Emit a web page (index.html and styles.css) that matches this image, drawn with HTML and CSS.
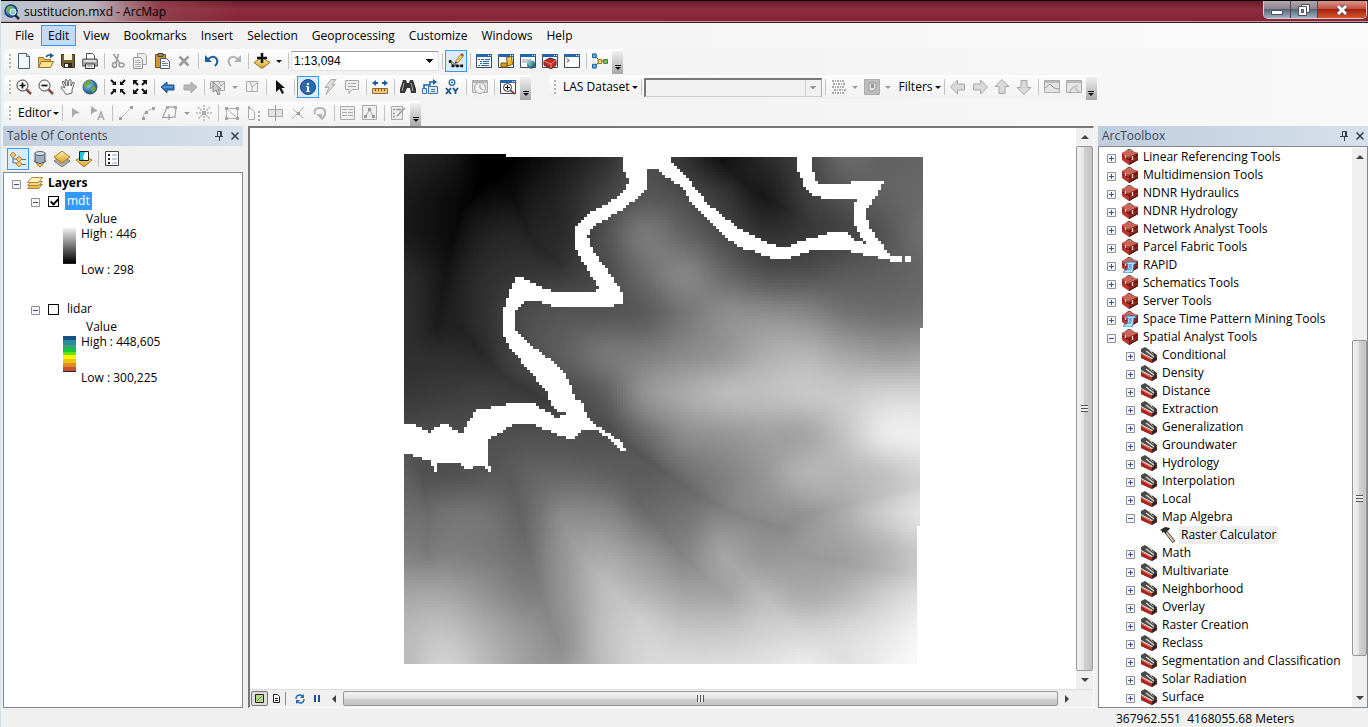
FILE: index.html
```html
<!doctype html>
<html lang="en">
    <head>
        <meta charset="UTF-8" />
        <meta name="viewport" content="width=device-width, initial-scale=1.0" />
        <title>sustitucion.mxd - ArcMap</title>
        <link rel="stylesheet" href="styles.css" />
    </head>
    <body>
        <!-- icon sprite -->
        <svg class="sprite" aria-hidden="true">
            <defs>
                <linearGradient id="gYellow" x1="0" y1="0" x2="0" y2="1">
                    <stop offset="0" stop-color="#fff0a8" />
                    <stop offset="1" stop-color="#d99b22" />
                </linearGradient>
                <radialGradient id="gGlobe" cx="0.35" cy="0.3" r="0.8">
                    <stop offset="0" stop-color="#a8dcf5" />
                    <stop offset="0.6" stop-color="#2c78b8" />
                    <stop offset="1" stop-color="#123c70" />
                </radialGradient>
            </defs>
            <symbol id="app" viewBox="0 0 16 16">
                <circle cx="7" cy="7" r="6" fill="url(#gGlobe)" stroke="#164070" stroke-width="1.5" />
                <path d="M3 3l4-1 2 2-2 2-1 4-3-3zM9 6l3-1-1 4-2 1z" fill="#6fb34a" />
                <circle cx="9" cy="8" r="3" fill="#cdeefb" fill-opacity=".5" stroke="#eaf6ff" />
                <path d="M11 11l4 4" stroke="#1c2c40" stroke-width="2.5" />
            </symbol>
            <symbol id="new" viewBox="0 0 16 16">
                <path d="M2.5.5h8l3 3v12h-11z" fill="#f2f9fd" stroke="#4c6070" />
                <path d="M10.5.5v3h3" fill="#cfe2ee" stroke="#4c6070" />
            </symbol>
            <symbol id="open" viewBox="0 0 16 16">
                <path d="M.5 14.5v-10h5l1 2h6v3" fill="#e9bd52" stroke="#9a7424" />
                <path d="M.5 14.5l3-6h12l-3 6z" fill="#ffe393" stroke="#9a7424" />
                <path d="M8 4q2-3 5-1.5" fill="none" stroke="#1d5795" stroke-width="1.5" />
                <path d="M12 0l4 2.5-4 3z" fill="#1d5795" />
            </symbol>
            <symbol id="save" viewBox="0 0 16 16">
                <path d="M1.5 1.5h13v13h-11l-2-2z" fill="#77622a" stroke="#3b3322" />
                <path d="M4 1h8v6H4z" fill="#f8f4dd" />
                <path d="M4 10h8v5H4z" fill="#2e2b28" />
                <path d="M5 11h3v3H5z" fill="#eee" />
            </symbol>
            <symbol id="print" viewBox="0 0 16 16">
                <path d="M4.5 6V.5h6l2 2V6" fill="#fff" stroke="#555" />
                <path d="M1 6h14l1 2v5H0V8z" fill="#a5a5a5" stroke="#333" stroke-width=".8" />
                <path d="M2 7h12v2H2z" fill="#ddd" />
                <path d="M3.5 11h9v4.5h-9z" fill="#fff" stroke="#333" />
                <path d="M5 13h6" stroke="#777" />
            </symbol>
            <symbol id="cut" viewBox="0 0 16 16">
                <g fill="none" stroke="#9a9a9a" stroke-width="1.5">
                    <path d="M3.5 1l6 9M8.5 1L6 10" />
                    <ellipse cx="4.5" cy="12" rx="2" ry="2.5" />
                    <ellipse cx="11.5" cy="12" rx="2.5" ry="2" />
                </g>
            </symbol>
            <symbol id="copy" viewBox="0 0 16 16">
                <path d="M5.5.5h7l2 2v9h-9z" fill="#eee" stroke="#a2a2a2" />
                <path d="M1.5 4.5h7l2 2v9h-9z" fill="#f2f2f2" stroke="#979797" />
                <path d="M3 7.5h5M3 9.5h6M3 11.5h6M3 13.5h6" stroke="#b4b4b4" />
            </symbol>
            <symbol id="paste" viewBox="0 0 16 16">
                <path d="M1.5 1.5h10v13h-10z" fill="#d79632" stroke="#775119" />
                <path d="M4 .5h5v3H4z" fill="#888" stroke="#444" />
                <path d="M6.5 5.5h6l3 3v7h-9z" fill="#fff" stroke="#46596c" />
                <path d="M8 8.5h3M8 10.5h6M8 12.5h6" stroke="#6788a8" />
            </symbol>
            <symbol id="delete" viewBox="0 0 16 16">
                <path d="M3.5 3.5l9 9m0-9l-9 9" stroke="#9b9b9b" stroke-width="2.5" />
            </symbol>
            <symbol id="undo" viewBox="0 0 16 16">
                <path d="M4 6q5-4 8-1 3 4-1 8" fill="none" stroke="#235ba0" stroke-width="2" />
                <path d="M1 2v7h7z" fill="#235ba0" />
            </symbol>
            <symbol id="redo" viewBox="0 0 16 16">
                <path d="M12 6q-5-4-8-1-3 4 1 8" fill="none" stroke="#b0b0b0" stroke-width="2" />
                <path d="M15 2v7H8z" fill="#b0b0b0" />
            </symbol>
            <symbol id="add" viewBox="0 0 16 16">
                <path d="M0 9.5l8-5 8 5-8 6z" fill="url(#gYellow)" stroke="#9b7226" />
                <path d="M8 0v10M3 5h10" stroke="#111" stroke-width="2.5" />
            </symbol>
            <symbol id="sketch" viewBox="0 0 18 18">
                <path d="M2.5 10L6 14.5h9M5 10l4 4" fill="none" stroke="#222" />
                <path d="M1 8h3v3H1zM4 13h3v3H4zM9 13h3v3H9zM14 13h3v3h-3z" fill="#111" />
                <path d="M8 10l6-8 3 2-6 7z" fill="#f5c45a" stroke="#815e25" stroke-width=".7" />
                <path d="M14 2l1.5-2L18 2l-1 2z" fill="#bd4b3b" />
                <path d="M8 10v2l3-1z" fill="#111" />
            </symbol>
            <symbol id="win" viewBox="0 0 16 16">
                <path d="M.5 1.5h15v13H.5z" fill="#fff" stroke="#384858" />
                <path d="M0 1h16v3H0z" fill="#2365ae" />
                <path d="M12 2h1v1h-1zM14 2h1v1h-1z" fill="#fff" />
            </symbol>
            <symbol id="toc" viewBox="0 0 16 16">
                <use href="#win" />
                <path d="M2 6.5h2M5 6.5h3M9 6.5h5M4 8.5h2M7 8.5h6M4 10.5h2M7 10.5h6M2 12.5h2M5 12.5h8" stroke="#2365ae" />
            </symbol>
            <symbol id="catalog" viewBox="0 0 16 16">
                <use href="#win" />
                <path d="M8.5 4.5l5-1 1 8-5 1.5z" fill="#f0ba36" stroke="#86600f" />
                <path d="M3 10h6v4H3z" fill="#dca027" stroke="#765515" />
                <path d="M10 6l3-1" stroke="#fff3b4" />
            </symbol>
            <symbol id="search" viewBox="0 0 16 16">
                <use href="#win" />
                <path d="M2 6h9v4H2z" fill="#c5cbd0" />
                <circle cx="11" cy="11.5" r="4" fill="url(#gGlobe)" />
                <path d="M9 10l3-1 1 2-3 3z" fill="#77aa4f" />
            </symbol>
            <symbol id="toolboxwin" viewBox="0 0 16 16">
                <use href="#win" />
                <path d="M2 8l6-3 6 2v5l-5 4-7-4z" fill="#b93026" stroke="#6d1717" />
                <path d="M2 8l7 3 5-4M9 11v4" fill="none" stroke="#e98a80" />
            </symbol>
            <symbol id="python" viewBox="0 0 16 16">
                <use href="#win" />
                <path d="M3 5.5l2 2-2 2" fill="none" stroke="#222" />
            </symbol>
            <symbol id="model" viewBox="0 0 17 16">
                <path d="M4 3l4 5-4 5M8 8h6" fill="none" stroke="#555" />
                <path d="M.5.5h4v4h-4zM.5 11.5h4v4h-4z" fill="#4cb3ec" stroke="#1c568e" />
                <path d="M6.5 6.5h4v4h-4z" fill="#ffdd50" stroke="#90661c" />
                <path d="M12.5 6.5h4v4h-4z" fill="#7fca5f" stroke="#35712a" />
            </symbol>
            <symbol id="zoomin" viewBox="0 0 16 16">
                <path d="M10 10l5 5" stroke="#8b4b41" stroke-width="2.5" />
                <circle cx="6.5" cy="6.5" r="5.5" fill="#f9f9f9" stroke="#333" />
                <path d="M6.5 3.5v6M3.5 6.5h6" stroke="#111" stroke-width="1.7" />
            </symbol>
            <symbol id="zoomout" viewBox="0 0 16 16">
                <path d="M10 10l5 5" stroke="#8b4b41" stroke-width="2.5" />
                <circle cx="6.5" cy="6.5" r="5.5" fill="#f9f9f9" stroke="#444" />
                <path d="M3.5 6.5h6" stroke="#111" stroke-width="1.7" />
            </symbol>
            <symbol id="pan" viewBox="0 0 16 16">
                <path d="M6 15.5Q4 12 1 9q0-2 2-1l2 1-3-6q1-2 2 0l2 4-1-6q1-1 2 0l1 6 1-6q1-1 2 0v6l2-4q2 0 1 2l-2 6v3z" fill="#fff" stroke="#555" stroke-width=".9" />
            </symbol>
            <symbol id="globe" viewBox="0 0 16 16">
                <circle cx="8" cy="8" r="7" fill="url(#gGlobe)" stroke="#315d7e" />
                <path d="M3 3l4-2 3 2-2 3-3 1-1 3-2-3zM9 8l4-1 1 3-3 4-2-2z" fill="#6fa647" />
            </symbol>
            <symbol id="fixedin" viewBox="0 0 16 16">
                <path d="M1 1l4 4M15 1l-4 4M1 15l4-4M15 15l-4-4" stroke="#111" stroke-width="2" />
                <path d="M6 2v4H2zM10 2v4h4zM6 14v-4H2zM10 14v-4h4z" fill="#111" />
            </symbol>
            <symbol id="fixedout" viewBox="0 0 16 16">
                <path d="M2 2l4 4M14 2l-4 4M2 14l4-4M14 14l-4-4" stroke="#111" stroke-width="2" />
                <path d="M1 1v5l5-5zM15 1v5l-5-5zM1 15v-5l5 5zM15 15v-5l-5 5z" fill="#111" />
            </symbol>
            <symbol id="back" viewBox="0 0 16 16">
                <path d="M1 8l6-5v3h7v5H7v3z" fill="#2871bd" stroke="#1e528b" />
                <path d="M3 8h10" stroke="#72b3e8" />
            </symbol>
            <symbol id="forward" viewBox="0 0 16 16">
                <path d="M15 8L9 3v3H2v5h7v3z" fill="#b8b8b8" stroke="#a6a6a6" />
            </symbol>
            <symbol id="selfeat" viewBox="0 0 16 16">
                <path d="M.5 2.5h14v9H9M3 7L.5 10V2.5" fill="#e8e8e8" stroke="#a5a5a5" />
                <path d="M9 3l2 4 3-3" fill="none" stroke="#aaa" />
                <path d="M3 3l8 7H8l2 5-2 1-2-5-3 2z" fill="#ccc" stroke="#888" />
            </symbol>
            <symbol id="clearsel" viewBox="0 0 16 16">
                <path d="M2.5 2.5h11v10h-11z" fill="#f1f1f1" stroke="#aaa" />
                <path d="M6 3l2 5 5-4M8 8v4" fill="none" stroke="#aaa" />
            </symbol>
            <symbol id="cursor" viewBox="0 0 16 16">
                <path d="M4 1l9 8H9.5l2.5 5-2 1-2.5-5L4 13z" fill="#111" />
            </symbol>
            <symbol id="info" viewBox="0 0 16 16">
                <circle cx="8" cy="8" r="7.5" fill="#2d69ae" stroke="#164a85" />
                <path d="M6 7h3v5h1v1H6v-1h1V8H6zM7 4h2v2H7z" fill="#fff" />
            </symbol>
            <symbol id="bolt" viewBox="0 0 16 16">
                <path d="M9 .5h5l-4 5h3l-9 10 3-7H3z" fill="#ddd" stroke="#a9a9a9" />
            </symbol>
            <symbol id="popup" viewBox="0 0 16 16">
                <path d="M1.5 1.5h13v9H8l-3 4v-4H1.5z" fill="#eee" stroke="#a6a6a6" />
                <path d="M4 4.5h2M7 4.5h5M4 7.5h8" stroke="#a6a6a6" />
            </symbol>
            <symbol id="measure" viewBox="0 0 16 16">
                <path d="M0 4l4-3v2h2v2H4v2zM16 4l-4-3v2h-2v2h2v2z" fill="#1c5ea7" />
                <path d="M.5 9.5h15v5H.5z" fill="#f4c675" stroke="#94692f" />
                <path d="M3.5 10v2M6.5 10v2M9.5 10v2M12.5 10v2" stroke="#78501e" />
            </symbol>
            <symbol id="find" viewBox="0 0 16 16">
                <path d="M3 1h3l1 3h2l1-3h3l3 9v4h-5l-1-5H7l-2 5H0v-4z" fill="#373737" />
                <path d="M4 4l-2 8M11 4l2 8" stroke="#aaa" />
            </symbol>
            <symbol id="route" viewBox="0 0 16 16">
                <path d="M2 12V6h6V3h5" fill="none" stroke="#1c5ea7" stroke-width="1.5" />
                <path d="M11 0l4 3-4 3z" fill="#1c5ea7" />
                <path d="M.5 9.5h4v5h-4zM6.5 7.5h9v7h-9z" fill="#dcecf7" stroke="#3a73a8" />
                <path d="M9 10.5h4M9 12.5h4" stroke="#3a73a8" />
            </symbol>
            <symbol id="xy" viewBox="0 0 16 16">
                <circle cx="8" cy="3.5" r="2.8" fill="#fff" stroke="#1e6ba5" stroke-width="1.3" />
                <circle cx="8" cy="3.5" r="1" fill="#1e6ba5" />
                <path d="M2 9l5 6M7 9l-5 6M9 9l2.5 3L14 9M11.5 12v3" fill="none" stroke="#17558e" stroke-width="1.8" />
            </symbol>
            <symbol id="time" viewBox="0 0 16 16">
                <path d="M.5 1.5h15v12H.5z" fill="#e2e2e2" stroke="#aaa" />
                <path d="M1 2h14v2H1z" fill="#b8b8b8" />
                <circle cx="8" cy="9" r="5.5" fill="#eee" stroke="#aaa" />
                <path d="M8 5.5V9l3 2" fill="none" stroke="#999" />
            </symbol>
            <symbol id="viewer" viewBox="0 0 16 16">
                <use href="#win" />
                <path d="M10 11l5 4" stroke="#8b4b41" stroke-width="2" />
                <circle cx="7.5" cy="8.5" r="4" fill="#fff" stroke="#333" />
                <path d="M5 8.5h5M7.5 6v5" stroke="#111" />
            </symbol>
            <symbol id="points" viewBox="0 0 16 16">
                <path d="M1 2h13M2 5h13M1 8h13M3 11h12M1 14h13" stroke="#aaa" stroke-width="2" stroke-dasharray="2 1 1 1" />
            </symbol>
            <symbol id="surface" viewBox="0 0 16 16">
                <path d="M.5.5h15v15H.5z" fill="#bcbcbc" stroke="#aaa" />
                <path d="M5 4h7v5l-3 3H5z" fill="#e1e1e1" stroke="#999" />
                <path d="M7 5h3v4H7z" fill="#999" />
            </symbol>
            <symbol id="arrow" viewBox="0 0 16 16">
                <path d="M.5 8l7-7v4h7v6h-7v4z" fill="#dadada" stroke="#a8a8a8" />
            </symbol>
            <symbol id="profile" viewBox="0 0 16 16">
                <path d="M.5 1.5h15v12H.5z" fill="#e4e4e4" stroke="#aaa" />
                <path d="M1 9l5-4 4 4 5 1" fill="none" stroke="#999" />
                <path d="M1 2h14v2H1z" fill="#bbb" />
            </symbol>
            <symbol id="profile2" viewBox="0 0 16 16">
                <path d="M.5 1.5h15v12H.5z" fill="#e4e4e4" stroke="#aaa" />
                <path d="M4 13q2-6 8-6M9 9l4 4" fill="none" stroke="#bbb" stroke-width="1.5" />
                <path d="M1 2h14v2H1z" fill="#bbb" />
            </symbol>
            <symbol id="editarrow" viewBox="0 0 16 16">
                <path d="M4 3l8 5-5 1-3 4z" fill="#aaa" />
            </symbol>
            <symbol id="editanno" viewBox="0 0 16 16">
                <path d="M1 1l7 5-4 1-3 3z" fill="#aaa" />
                <path d="M8 15l3-8 3 8M9 12h4" fill="none" stroke="#aaa" stroke-width="1.5" />
            </symbol>
            <symbol id="line" viewBox="0 0 16 16">
                <path d="M3 13L13 3" stroke="#bbb" />
                <path d="M1 12h3v3H1zM12 1h3v3h-3z" fill="#a0a0a0" />
            </symbol>
            <symbol id="arc" viewBox="0 0 16 16">
                <path d="M3 14q0-9 10-10" fill="none" stroke="#bbb" />
                <path d="M2 12h3v3H2zM5 6h3v3H5zM12 2h3v3h-3z" fill="#a0a0a0" />
            </symbol>
            <symbol id="trace" viewBox="0 0 16 16">
                <path d="M1 12L5 2h9l-1 10h-3" fill="none" stroke="#aaa" stroke-width="1.3" />
                <path d="M0 12.5h4M7 9v6M4 12.5h6" stroke="#999" stroke-width="1.2" />
                <path d="M4 1h3v3H4zM12 1h3v3h-3z" fill="#aaa" />
            </symbol>
            <symbol id="burst" viewBox="0 0 16 16">
                <path d="M8 0v5M8 11v5M0 8h5M11 8h5M2 2l4 4M10 10l4 4M14 2l-4 4M6 10l-4 4" stroke="#b4b4b4" stroke-width="1.5" stroke-dasharray="2 1" />
                <path d="M6 6h4v4H6z" fill="#aaa" />
            </symbol>
            <symbol id="vertices" viewBox="0 0 16 16">
                <path d="M2.5 13.5v-10h11v10zM3 4l10 9" fill="none" stroke="#b0b0b0" />
                <path d="M1 2h3v3H1zM1 12h3v3H1zM12 12h3v3h-3zM12 2h3v3h-3z" fill="#a5a5a5" />
            </symbol>
            <symbol id="reshape" viewBox="0 0 16 16">
                <path d="M2.5 13.5v-12l6 5v8h-6" fill="none" stroke="#aaa" />
                <path d="M12 6h2v2h-2zM12 10h2v2h-2zM12 14h2v2h-2zM2 1h2v3H2z" fill="#aaa" />
            </symbol>
            <symbol id="split" viewBox="0 0 16 16">
                <path d="M.5 4.5h14v7H.5z" fill="#e3e3e3" stroke="#aaa" />
                <path d="M7.5 0v16" stroke="#999" />
            </symbol>
            <symbol id="cross" viewBox="0 0 16 16">
                <path d="M2 14L14 2M3 4l10 9" stroke="#b0b0b0" />
                <path d="M7 7h3v3H7z" fill="#999" />
            </symbol>
            <symbol id="rotate" viewBox="0 0 16 16">
                <path d="M3 9q-2-6 5-6 6 0 5 6-1 4-4 5" fill="none" stroke="#b2b2b2" stroke-width="2" />
                <path d="M4 9h6v6z" fill="#b2b2b2" />
            </symbol>
            <symbol id="table" viewBox="0 0 16 16">
                <path d="M.5 1.5h14v13H.5z" fill="#f1f1f1" stroke="#aaa" />
                <path d="M2 4.5h5M8 4.5h5M2 7.5h5M8 7.5h5M2 10.5h5M8 10.5h5" stroke="#aaa" />
            </symbol>
            <symbol id="sketchprop" viewBox="0 0 16 16">
                <path d="M.5.5h14v14H.5zM3 12l4.5-7 4.5 7" fill="#eee" stroke="#aaa" />
                <path d="M6 3h3v3H6zM2 10h3v3H2zM10 10h3v3h-3z" fill="#999" />
            </symbol>
            <symbol id="create" viewBox="0 0 16 16">
                <path d="M1.5 1.5h11v13h-11z" fill="#eee" stroke="#aaa" />
                <path d="M3 4.5h2M6 4.5h5M3 8.5h2M3 11.5h2M7 11l8-8" stroke="#999" stroke-width="1.5" />
            </symbol>
            <symbol id="bydraw" viewBox="0 0 16 16">
                <path d="M3 5v7h5M3 8h5M12 8.5h4M12 13.5h4" fill="none" stroke="#456f9c" />
                <path d="M0 4l3-3 3 3-3 3zM6 8l3-3 3 3-3 3zM6 13l3-3 3 3-3 3z" fill="#f6c564" stroke="#a57223" stroke-width=".8" />
            </symbol>
            <symbol id="bysource" viewBox="0 0 16 16">
                <path d="M2 10l6 6 6-6z" fill="#f4c04a" stroke="#a77b24" />
                <path d="M3 2v9q5 3 10 0V2z" fill="#9daebf" stroke="#4d5c6c" />
                <ellipse cx="8" cy="2.5" rx="5" ry="2" fill="#dce5ed" stroke="#4d5c6c" />
            </symbol>
            <symbol id="byvis" viewBox="0 0 16 16">
                <path d="M0 10l8-5 8 5-8 6z" fill="#aaa" stroke="#777" />
                <path d="M0 6l8-6 8 6-8 6z" fill="url(#gYellow)" stroke="#a77b24" />
            </symbol>
            <symbol id="bysel" viewBox="0 0 16 16">
                <path d="M0 9l8-4 8 4-8 7z" fill="url(#gYellow)" stroke="#a77b24" />
                <path d="M3.5.5h9v9h-9z" fill="#25c5dd" stroke="#222" />
                <path d="M9 1h3v8H8l-1-3z" fill="#fff" />
            </symbol>
            <symbol id="options" viewBox="0 0 16 16">
                <path d="M1.5.5h13v14h-13z" fill="#fff" stroke="#444" />
                <path d="M4 3h2v2H4zM4 7h2v2H4zM4 11h2v2H4z" fill="#222" />
                <path d="M8 4h5M8 8h5M8 12h5" stroke="#8aa1c0" />
            </symbol>
            <symbol id="layers" viewBox="0 0 16 16">
                <path d="M.5 13.5l4-4h11l-4 4z" fill="#eebe55" stroke="#b08540" />
                <path d="M.5 10.5l4-4h11l-4 4z" fill="#f7d77d" stroke="#b08540" />
                <path d="M.5 7.5l4-5h11l-4 5z" fill="#fff2bd" stroke="#b08540" />
            </symbol>
            <symbol id="toolbox" viewBox="0 0 16 16">
                <path d="M4 4Q4 .5 7 .5t5 3" fill="none" stroke="#333" />
                <path d="M0 4l6-3 10 3v7l-9 5-7-5z" fill="#b5382b" />
                <path d="M0 4l6-3 10 3-9 4z" fill="#c9665a" />
                <path d="M7 8l9-4v7l-9 5z" fill="#8a241c" />
                <path d="M0 7l7 3.5L16 6" fill="none" stroke="#551310" />
                <path d="M3.5 6v3M10.5 7v4" stroke="#e8d0ca" stroke-width="1.4" />
                <path d="M7 15.5l9-5" stroke="#3b1512" />
            </symbol>
            <symbol id="script" viewBox="0 0 16 16">
                <use href="#toolbox" />
                <path d="M4 5h9q2 0 1 2h-2l-1 7q0 2-3 2H2q-1-2 1-3h2l1-6H4z" fill="#b9e2ff" stroke="#2673b8" stroke-width=".9" />
                <path d="M7 8h3M7 10h3M6 12h3" stroke="#2a79c0" />
            </symbol>
            <symbol id="toolset" viewBox="0 0 16 16">
                <path d="M0 2l4-2 12 8v3l-3 1L0 5z" fill="#4a4a4a" />
                <path d="M0 6l11 6 5-2v3l-5 3L0 11z" fill="#c53226" />
                <path d="M11 12l5-2v3l-5 3z" fill="#3a2220" />
                <path d="M0 8l11 6v2L0 11z" fill="#a3271f" />
                <path d="M1 7l9 5" stroke="#ee8175" />
                <path d="M5 4l8 6M8 2l5 5" stroke="#d9d2c4" stroke-width="1.5" />
                <path d="M11 5l3 2v4" fill="none" stroke="#222" />
            </symbol>
            <symbol id="hammer" viewBox="0 0 16 16">
                <path d="M6 5l8 10" stroke="#4f4637" stroke-width="3.5" />
                <path d="M6 5l7.5 9.5" stroke="#ddd3b8" stroke-width="1.7" />
                <path d="M0 3l5-3 5 1-1 2-2 1-1 3-2-2-2 1V4z" fill="#292929" />
            </symbol>
            <symbol id="plus" viewBox="0 0 9 9">
                <path d="M.5.5h8v8h-8z" fill="#f6f6f6" stroke="#8e9197" />
                <path d="M2 4.5h5M4.5 2v5" stroke="#3450a2" />
            </symbol>
            <symbol id="minus" viewBox="0 0 9 9">
                <path d="M.5.5h8v8h-8z" fill="#f6f6f6" stroke="#8e9197" />
                <path d="M2 4.5h5" stroke="#3450a2" />
            </symbol>
            <symbol id="pin" viewBox="0 0 10 10">
                <path d="M3.5.5h4v5h-4zM1 5.5h8M5.5 6v4M6.5 1v4" fill="none" stroke="#333c48" />
            </symbol>
            <symbol id="close" viewBox="0 0 10 10">
                <path d="M1.5 1.5l7 7m0-7l-7 7" stroke="#333c48" stroke-width="1.5" />
            </symbol>
            <symbol id="dataview" viewBox="0 0 10 10">
                <path d="M.5.5h8v8h-8z" fill="#b8d978" stroke="#222" />
                <path d="M2 7l5-5" stroke="#4d88b8" />
            </symbol>
            <symbol id="layout" viewBox="0 0 10 10">
                <path d="M1.5.5h4l2 2v6h-6z" fill="#fff" stroke="#222" />
                <path d="M3 4.5h3M3 6.5h3" stroke="#222" />
            </symbol>
            <symbol id="refresh" viewBox="0 0 10 10">
                <path d="M1 5q0-4 4-4 2 0 3 2M9 5q0 4-4 4-2 0-3-2" fill="none" stroke="#2365ae" stroke-width="1.4" />
                <path d="M9 0v4H5zM1 10V6h4z" fill="#2365ae" />
            </symbol>
            <symbol id="pause" viewBox="0 0 10 10">
                <path d="M2 1h2v7H2zM6 1h2v7H6z" fill="#1c5297" />
            </symbol>
        </svg>

        <header class="titlebar">
            <svg class="icon"><use href="#app" /></svg>
            <h1>sustitucion.mxd - ArcMap</h1>
            <div class="window-buttons">
                <button class="win-btn" aria-label="Minimize">
                    <svg viewBox="0 0 14 12"><path d="M1.5 6.5h11v4h-11z" fill="#fff" stroke="#4b4f60" /></svg>
                </button>
                <button class="win-btn" aria-label="Restore">
                    <svg viewBox="0 0 14 12"><path d="M4.5.5h8v8h-8z" fill="#fff" stroke="#4b4f60" /><path d="M1.5 2.5h8v9h-8z" fill="#fff" stroke="#4b4f60" /><path d="M4.5 5.5h2v3h-2z" fill="#8898ac" stroke="#4b4f60" /></svg>
                </button>
                <button class="win-btn win-close" aria-label="Close">
                    <svg viewBox="0 0 14 12"><path d="M3 2l8 8m0-8l-8 8" stroke="#4b4f60" stroke-width="4.5" /><path d="M3 2l8 8m0-8l-8 8" stroke="#fff" stroke-width="2.8" /></svg>
                </button>
            </div>
        </header>

        <nav class="menubar">
            <button>File</button>
            <button class="active">Edit</button>
            <button>View</button>
            <button>Bookmarks</button>
            <button>Insert</button>
            <button>Selection</button>
            <button>Geoprocessing</button>
            <button>Customize</button>
            <button>Windows</button>
            <button>Help</button>
        </nav>

        <div class="toolbars">
            <div class="toolbar-row">
                <div class="toolbar">
                    <span class="grip"></span>
                    <button class="tool" aria-label="New"><svg><use href="#new" /></svg></button>
                    <button class="tool" aria-label="Open"><svg><use href="#open" /></svg></button>
                    <button class="tool" aria-label="Save"><svg><use href="#save" /></svg></button>
                    <button class="tool" aria-label="Print"><svg><use href="#print" /></svg></button>
                    <span class="sep"></span>
                    <button class="tool" aria-label="Cut"><svg><use href="#cut" /></svg></button>
                    <button class="tool" aria-label="Copy"><svg><use href="#copy" /></svg></button>
                    <button class="tool" aria-label="Paste"><svg><use href="#paste" /></svg></button>
                    <button class="tool" aria-label="Delete"><svg><use href="#delete" /></svg></button>
                    <span class="sep"></span>
                    <button class="tool" aria-label="Undo"><svg><use href="#undo" /></svg></button>
                    <button class="tool" aria-label="Redo"><svg><use href="#redo" /></svg></button>
                    <span class="sep"></span>
                    <button class="tool" aria-label="Add data"><svg><use href="#add" /></svg></button>
                    <button class="drop" aria-label="Add data options"></button>
                    <span class="sep"></span>
                    <select class="scale" aria-label="Map scale">
                        <option>1:13,094</option>
                    </select>
                    <span class="sep"></span>
                    <button class="tool active" aria-label="Editor toolbar"><svg><use href="#sketch" /></svg></button>
                    <span class="sep"></span>
                    <button class="tool" aria-label="Table of contents"><svg><use href="#toc" /></svg></button>
                    <button class="tool" aria-label="Catalog"><svg><use href="#catalog" /></svg></button>
                    <button class="tool" aria-label="Search"><svg><use href="#search" /></svg></button>
                    <button class="tool" aria-label="ArcToolbox"><svg><use href="#toolboxwin" /></svg></button>
                    <button class="tool" aria-label="Python"><svg><use href="#python" /></svg></button>
                    <span class="sep"></span>
                    <button class="tool" aria-label="ModelBuilder"><svg><use href="#model" /></svg></button>
                    <button class="more" aria-label="Toolbar options"></button>
                </div>
            </div>

            <div class="toolbar-row">
                <div class="toolbar">
                    <span class="grip"></span>
                    <button class="tool" aria-label="Zoom in"><svg><use href="#zoomin" /></svg></button>
                    <button class="tool" aria-label="Zoom out"><svg><use href="#zoomout" /></svg></button>
                    <button class="tool" aria-label="Pan"><svg><use href="#pan" /></svg></button>
                    <button class="tool" aria-label="Full extent"><svg><use href="#globe" /></svg></button>
                    <span class="sep"></span>
                    <button class="tool" aria-label="Fixed zoom in"><svg><use href="#fixedin" /></svg></button>
                    <button class="tool" aria-label="Fixed zoom out"><svg><use href="#fixedout" /></svg></button>
                    <span class="sep"></span>
                    <button class="tool" aria-label="Previous extent"><svg><use href="#back" /></svg></button>
                    <button class="tool" aria-label="Next extent"><svg><use href="#forward" /></svg></button>
                    <span class="sep"></span>
                    <button class="tool" aria-label="Select features"><svg><use href="#selfeat" /></svg></button>
                    <button class="drop off" aria-label="Select options"></button>
                    <button class="tool" aria-label="Clear selection"><svg><use href="#clearsel" /></svg></button>
                    <span class="sep"></span>
                    <button class="tool" aria-label="Select elements"><svg><use href="#cursor" /></svg></button>
                    <span class="sep"></span>
                    <button class="tool active" aria-label="Identify"><svg><use href="#info" /></svg></button>
                    <button class="tool" aria-label="Hyperlink"><svg><use href="#bolt" /></svg></button>
                    <button class="tool" aria-label="HTML popup"><svg><use href="#popup" /></svg></button>
                    <span class="sep"></span>
                    <button class="tool" aria-label="Measure"><svg><use href="#measure" /></svg></button>
                    <span class="sep"></span>
                    <button class="tool" aria-label="Find"><svg><use href="#find" /></svg></button>
                    <button class="tool" aria-label="Find route"><svg><use href="#route" /></svg></button>
                    <button class="tool" aria-label="Go to XY"><svg><use href="#xy" /></svg></button>
                    <span class="sep"></span>
                    <button class="tool" aria-label="Time slider"><svg><use href="#time" /></svg></button>
                    <span class="sep"></span>
                    <button class="tool" aria-label="Viewer window"><svg><use href="#viewer" /></svg></button>
                    <button class="more" aria-label="Toolbar options"></button>
                </div>
                <div class="toolbar las">
                    <span class="grip"></span>
                    <button class="text-drop">LAS Dataset</button>
                    <span class="sep"></span>
                    <select class="las-select" aria-label="LAS dataset" disabled>
                        <option></option>
                    </select>
                    <span class="sep"></span>
                    <button class="tool" aria-label="Point symbology"><svg><use href="#points" /></svg></button>
                    <button class="drop off" aria-label="Point options"></button>
                    <button class="tool" aria-label="Surface symbology"><svg><use href="#surface" /></svg></button>
                    <button class="drop off" aria-label="Surface options"></button>
                    <button class="text-drop">Filters</button>
                    <span class="sep"></span>
                    <button class="tool" aria-label="Left"><svg><use href="#arrow" /></svg></button>
                    <button class="tool" aria-label="Right"><svg class="turn-right"><use href="#arrow" /></svg></button>
                    <button class="tool" aria-label="Up"><svg class="turn-up"><use href="#arrow" /></svg></button>
                    <button class="tool" aria-label="Down"><svg class="turn-down"><use href="#arrow" /></svg></button>
                    <span class="sep"></span>
                    <button class="tool" aria-label="Profile view"><svg><use href="#profile" /></svg></button>
                    <button class="tool" aria-label="3D view"><svg><use href="#profile2" /></svg></button>
                    <button class="more" aria-label="Toolbar options"></button>
                </div>
            </div>

            <div class="toolbar-row">
                <div class="toolbar">
                    <span class="grip"></span>
                    <button class="text-drop">Editor</button>
                    <span class="sep"></span>
                    <button class="tool" aria-label="Edit tool"><svg><use href="#editarrow" /></svg></button>
                    <button class="tool" aria-label="Edit annotation"><svg><use href="#editanno" /></svg></button>
                    <span class="sep"></span>
                    <button class="tool" aria-label="Straight segment"><svg><use href="#line" /></svg></button>
                    <button class="tool" aria-label="Arc segment"><svg><use href="#arc" /></svg></button>
                    <button class="tool" aria-label="Trace"><svg><use href="#trace" /></svg></button>
                    <button class="drop off" aria-label="Trace options"></button>
                    <button class="tool" aria-label="Point"><svg><use href="#burst" /></svg></button>
                    <span class="sep"></span>
                    <button class="tool" aria-label="Edit vertices"><svg><use href="#vertices" /></svg></button>
                    <button class="tool" aria-label="Reshape"><svg><use href="#reshape" /></svg></button>
                    <button class="tool" aria-label="Cut polygons"><svg><use href="#split" /></svg></button>
                    <button class="tool" aria-label="Split"><svg><use href="#cross" /></svg></button>
                    <button class="tool" aria-label="Rotate"><svg><use href="#rotate" /></svg></button>
                    <span class="sep"></span>
                    <button class="tool" aria-label="Attributes"><svg><use href="#table" /></svg></button>
                    <button class="tool" aria-label="Sketch properties"><svg><use href="#sketchprop" /></svg></button>
                    <span class="sep"></span>
                    <button class="tool" aria-label="Create features"><svg><use href="#create" /></svg></button>
                    <button class="more" aria-label="Toolbar options"></button>
                </div>
            </div>
        </div>

        <main class="workspace">
            <section class="panel toc">
                <div class="panel-head">
                    <h2>Table Of Contents</h2>
                    <button aria-label="Auto hide"><svg><use href="#pin" /></svg></button>
                    <button aria-label="Close"><svg><use href="#close" /></svg></button>
                </div>
                <div class="panel-tools">
                    <button class="tool active" aria-label="List by drawing order"><svg><use href="#bydraw" /></svg></button>
                    <button class="tool" aria-label="List by source"><svg><use href="#bysource" /></svg></button>
                    <button class="tool" aria-label="List by visibility"><svg><use href="#byvis" /></svg></button>
                    <button class="tool" aria-label="List by selection"><svg><use href="#bysel" /></svg></button>
                    <span class="sep"></span>
                    <button class="tool" aria-label="Options"><svg><use href="#options" /></svg></button>
                </div>
                <div class="panel-body">
                    <div class="row"><svg class="exp"><use href="#minus" /></svg><svg class="icon"><use href="#layers" /></svg><b>Layers</b></div>
                    <div class="row lv2">
                        <svg class="exp"><use href="#minus" /></svg>
                        <input type="checkbox" id="mdt" checked />
                        <label for="mdt" class="selected">mdt</label>
                    </div>
                    <div class="legend">
                        <p>Value</p>
                        <div class="ramp gray"></div>
                        <div class="range"><span>High : 446</span><span>Low : 298</span></div>
                    </div>
                    <div class="row lv2">
                        <svg class="exp"><use href="#minus" /></svg>
                        <input type="checkbox" id="lidar" />
                        <label for="lidar">lidar</label>
                    </div>
                    <div class="legend">
                        <p>Value</p>
                        <div class="ramp color"></div>
                        <div class="range"><span>High : 448,605</span><span>Low : 300,225</span></div>
                    </div>
                </div>
            </section>

            <section class="mapframe">
                <div class="mapview">
                    <canvas id="terrain" width="173" height="170"></canvas>
                </div>
                <div class="vscroll">
                    <button class="up" aria-label="Scroll up"></button>
                    <div class="track"><div class="thumb"></div></div>
                    <button class="down" aria-label="Scroll down"></button>
                </div>
                <div class="viewbar">
                    <button class="view on" aria-label="Data view"><svg><use href="#dataview" /></svg></button>
                    <button class="view" aria-label="Layout view"><svg><use href="#layout" /></svg></button>
                    <span class="bar"></span>
                    <button class="view wide" aria-label="Refresh"><svg><use href="#refresh" /></svg></button>
                    <button class="view" aria-label="Pause drawing"><svg><use href="#pause" /></svg></button>
                    <div class="hscroll">
                        <button class="left" aria-label="Scroll left"></button>
                        <div class="thumb"></div>
                        <button class="right" aria-label="Scroll right"></button>
                    </div>
                </div>
            </section>

            <section class="panel toolbox">
                <div class="panel-head">
                    <h2>ArcToolbox</h2>
                    <button aria-label="Auto hide"><svg><use href="#pin" /></svg></button>
                    <button aria-label="Close"><svg><use href="#close" /></svg></button>
                </div>
                <div class="panel-body">
                    <div class="tree">
                        <div class="row"><svg class="exp"><use href="#plus" /></svg><svg class="icon"><use href="#toolbox" /></svg><span>Linear Referencing Tools</span></div>
                        <div class="row"><svg class="exp"><use href="#plus" /></svg><svg class="icon"><use href="#toolbox" /></svg><span>Multidimension Tools</span></div>
                        <div class="row"><svg class="exp"><use href="#plus" /></svg><svg class="icon"><use href="#toolbox" /></svg><span>NDNR Hydraulics</span></div>
                        <div class="row"><svg class="exp"><use href="#plus" /></svg><svg class="icon"><use href="#toolbox" /></svg><span>NDNR Hydrology</span></div>
                        <div class="row"><svg class="exp"><use href="#plus" /></svg><svg class="icon"><use href="#toolbox" /></svg><span>Network Analyst Tools</span></div>
                        <div class="row"><svg class="exp"><use href="#plus" /></svg><svg class="icon"><use href="#toolbox" /></svg><span>Parcel Fabric Tools</span></div>
                        <div class="row"><svg class="exp"><use href="#plus" /></svg><svg class="icon"><use href="#script" /></svg><span>RAPID</span></div>
                        <div class="row"><svg class="exp"><use href="#plus" /></svg><svg class="icon"><use href="#toolbox" /></svg><span>Schematics Tools</span></div>
                        <div class="row"><svg class="exp"><use href="#plus" /></svg><svg class="icon"><use href="#toolbox" /></svg><span>Server Tools</span></div>
                        <div class="row"><svg class="exp"><use href="#plus" /></svg><svg class="icon"><use href="#script" /></svg><span>Space Time Pattern Mining Tools</span></div>
                        <div class="row"><svg class="exp"><use href="#minus" /></svg><svg class="icon"><use href="#toolbox" /></svg><span>Spatial Analyst Tools</span></div>
                        <div class="row lv2"><svg class="exp"><use href="#plus" /></svg><svg class="icon"><use href="#toolset" /></svg><span>Conditional</span></div>
                        <div class="row lv2"><svg class="exp"><use href="#plus" /></svg><svg class="icon"><use href="#toolset" /></svg><span>Density</span></div>
                        <div class="row lv2"><svg class="exp"><use href="#plus" /></svg><svg class="icon"><use href="#toolset" /></svg><span>Distance</span></div>
                        <div class="row lv2"><svg class="exp"><use href="#plus" /></svg><svg class="icon"><use href="#toolset" /></svg><span>Extraction</span></div>
                        <div class="row lv2"><svg class="exp"><use href="#plus" /></svg><svg class="icon"><use href="#toolset" /></svg><span>Generalization</span></div>
                        <div class="row lv2"><svg class="exp"><use href="#plus" /></svg><svg class="icon"><use href="#toolset" /></svg><span>Groundwater</span></div>
                        <div class="row lv2"><svg class="exp"><use href="#plus" /></svg><svg class="icon"><use href="#toolset" /></svg><span>Hydrology</span></div>
                        <div class="row lv2"><svg class="exp"><use href="#plus" /></svg><svg class="icon"><use href="#toolset" /></svg><span>Interpolation</span></div>
                        <div class="row lv2"><svg class="exp"><use href="#plus" /></svg><svg class="icon"><use href="#toolset" /></svg><span>Local</span></div>
                        <div class="row lv2"><svg class="exp"><use href="#minus" /></svg><svg class="icon"><use href="#toolset" /></svg><span>Map Algebra</span></div>
                        <div class="row lv3"><svg class="icon"><use href="#hammer" /></svg><span class="current">Raster Calculator</span></div>
                        <div class="row lv2"><svg class="exp"><use href="#plus" /></svg><svg class="icon"><use href="#toolset" /></svg><span>Math</span></div>
                        <div class="row lv2"><svg class="exp"><use href="#plus" /></svg><svg class="icon"><use href="#toolset" /></svg><span>Multivariate</span></div>
                        <div class="row lv2"><svg class="exp"><use href="#plus" /></svg><svg class="icon"><use href="#toolset" /></svg><span>Neighborhood</span></div>
                        <div class="row lv2"><svg class="exp"><use href="#plus" /></svg><svg class="icon"><use href="#toolset" /></svg><span>Overlay</span></div>
                        <div class="row lv2"><svg class="exp"><use href="#plus" /></svg><svg class="icon"><use href="#toolset" /></svg><span>Raster Creation</span></div>
                        <div class="row lv2"><svg class="exp"><use href="#plus" /></svg><svg class="icon"><use href="#toolset" /></svg><span>Reclass</span></div>
                        <div class="row lv2"><svg class="exp"><use href="#plus" /></svg><svg class="icon"><use href="#toolset" /></svg><span>Segmentation and Classification</span></div>
                        <div class="row lv2"><svg class="exp"><use href="#plus" /></svg><svg class="icon"><use href="#toolset" /></svg><span>Solar Radiation</span></div>
                        <div class="row lv2"><svg class="exp"><use href="#plus" /></svg><svg class="icon"><use href="#toolset" /></svg><span>Surface</span></div>
                    </div>
                    <div class="vscroll">
                        <button class="up" aria-label="Scroll up"></button>
                        <div class="track"><div class="thumb"></div></div>
                        <button class="down" aria-label="Scroll down"></button>
                    </div>
                </div>
            </section>
        </main>

        <footer class="statusbar"><span>367962.551&nbsp; 4168055.68 Meters</span></footer>
        <script src="terrain.js"></script>
    </body>
</html>
```
FILE: styles.css
```css
* {
    box-sizing: border-box;
}

body {
    margin: 0;
    height: 100vh;
    display: flex;
    flex-direction: column;
    overflow: hidden;
    padding-left: 2px;
    background: #f0f0f0;
    border-left: 1px solid #cfe3ee;
    font: 12px/18px "Open Sans", "Noto Sans", sans-serif;
    color: #000;
}

h1,
h2,
p {
    margin: 0;
    font-size: 12px;
    font-weight: normal;
}

button {
    margin: 0;
    padding: 0;
    border: 0;
    background: none;
    font: inherit;
    color: inherit;
}

svg {
    display: block;
    flex: none;
}

.sprite {
    position: absolute;
    width: 0;
    height: 0;
}

.icon {
    width: 16px;
    height: 16px;
}

/* title bar */
.titlebar {
    height: 23px;
    flex: none;
    display: flex;
    align-items: center;
    gap: 4px;
    margin-left: -2px;
    padding-left: 3px;
    border-top: 1px solid #000;
    border-bottom: 1px solid #2d2024;
    box-shadow: inset 0 -1px #c99aa1;
    background:
        linear-gradient(90deg, #b9c6d2 0, #bcb4bd 90px, rgba(150, 70, 82, 0.7) 160px, rgba(135, 38, 52, 0) 240px),
        linear-gradient(#681c28, #8d2e3e 40%, #842230);
}

.titlebar h1 {
    flex: 1;
}

.window-buttons {
    display: flex;
    align-self: flex-start;
    margin-right: 1px;
    border: 1px solid #e2c9cd;
    border-top: 0;
    border-radius: 0 0 5px 5px;
    overflow: hidden;
}

.win-btn {
    width: 27px;
    height: 17px;
    display: flex;
    align-items: center;
    justify-content: center;
    border-right: 1px solid #56404a;
    background: linear-gradient(#b5a7ae, #8d8590 45%, #596878 50%, #9db2c4);
}

.win-btn svg {
    width: 14px;
    height: 12px;
}

.win-close {
    width: 48px;
    border-right: 0;
    background: linear-gradient(#d8968c, #c4523e 45%, #a52010 50%, #d5572c);
}

/* menu */
.menubar {
    height: 25px;
    flex: none;
    display: flex;
    align-items: center;
    padding-left: 5px;
    background: linear-gradient(90deg, #f0f0f0, #fbfbfb);
}

.menubar button {
    height: 21px;
    padding: 0 6px;
    border: 1px solid transparent;
}

.menubar .active {
    border-color: #3399ff;
    background: #c2dcf7;
}

/* toolbars */
.toolbars {
    flex: none;
    background: linear-gradient(90deg, #f0f0f0, #f8f8f8);
}

.toolbar-row {
    height: 26px;
    display: flex;
    gap: 16px;
}

.toolbar {
    display: flex;
    align-items: center;
    margin: 1px;
    border-radius: 3px;
    background: linear-gradient(#fcfcfc, #f1f1f1);
}

.grip {
    width: 2px;
    height: 14px;
    margin: 0 2px 0 5px;
    background: repeating-linear-gradient(#b5b5b5 0 2px, transparent 2px 4px);
}

.sep {
    width: 1px;
    height: 16px;
    margin: 0 2px 0 3px;
    background: #c3c3c3;
}

.tool {
    width: 22px;
    height: 22px;
    display: flex;
    align-items: center;
    justify-content: center;
    border: 1px solid transparent;
}

.tool svg {
    width: 16px;
    height: 16px;
}

.tool.active {
    border-color: #3399ff;
    background: #dcebfa;
}

.drop {
    width: 12px;
    height: 22px;
    display: flex;
    align-items: center;
    justify-content: center;
}

.drop::after,
.text-drop::after {
    content: "";
    border: 3px solid transparent;
    border-top-color: #111;
    border-bottom: 0;
}

.drop.off::after {
    border-top-color: #999;
}

.las .drop {
    width: 11px;
}

.text-drop {
    display: flex;
    align-items: center;
    gap: 2px;
    padding: 0 0 0 5px;
}

.more {
    align-self: flex-end;
    width: 11px;
    height: 23px;
    margin-left: 1px;
    margin-bottom: -1px;
    display: flex;
    flex-direction: column;
    align-items: center;
    justify-content: flex-end;
    padding-bottom: 4px;
    gap: 1px;
    background: linear-gradient(#f0f0f0, #a8a8a8);
}

.more::before {
    content: "";
    width: 6px;
    height: 1px;
    background: #111;
}

.more::after {
    content: "";
    border: 3px solid transparent;
    border-top-color: #111;
    border-bottom: 0;
}

select {
    appearance: none;
    height: 20px;
    padding: 0 2px;
    border: 1px solid #e3e3e3;
    border-radius: 0;
    color: #000;
    font: 12px/16px "Liberation Sans", Arial, sans-serif;
}

.scale {
    width: 148px;
    border-top-color: #999;
    background:
        linear-gradient(45deg, transparent 50%, #111 0) right 8px center / 4px 4px no-repeat,
        linear-gradient(-45deg, transparent 50%, #111 0) right 4px center / 4px 4px no-repeat,
        #fff;
}

.las-select {
    width: 178px;
    height: 19px;
    opacity: 1;
    border: 2px solid #777;
    border-right: 1px solid #aaa;
    border-bottom: 1px solid #ccc;
    background:
        linear-gradient(45deg, transparent 50%, #999 0) right 8px center / 4px 4px no-repeat,
        linear-gradient(-45deg, transparent 50%, #999 0) right 4px center / 4px 4px no-repeat,
        linear-gradient(90deg, #ccc, #ccc) right 15px center / 1px 100% no-repeat,
        #f1f1f1;
}

.turn-right {
    transform: rotate(180deg);
}

.turn-up {
    transform: rotate(90deg);
}

.turn-down {
    transform: rotate(-90deg);
}

/* workspace */
.workspace {
    flex: 1;
    min-height: 0;
    display: flex;
    gap: 4px;
}

.panel {
    flex: none;
    display: flex;
    flex-direction: column;
}

.toc {
    width: 240px;
    margin-right: 1px;
}

.toolbox {
    width: 270px;
}

.panel-head {
    height: 20px;
    flex: none;
    display: flex;
    align-items: center;
    gap: 4px;
    padding: 0 2px 0 4px;
    color: #3a4756;
    background: linear-gradient(90deg, #bfcddd, #d6e0eb);
}

.panel-head h2 {
    flex: 1;
}

.panel-head svg {
    width: 10px;
    height: 10px;
    margin: 1px;
}

.panel-tools {
    height: 26px;
    flex: none;
    display: flex;
    align-items: center;
    padding-left: 4px;
}

.panel-body {
    flex: 1;
    min-height: 0;
    border: 1px solid #828790;
    background: #fff;
    overflow: hidden;
    padding-top: 1px;
}

.row {
    height: 18px;
    display: flex;
    align-items: center;
    padding-left: 8px;
    white-space: nowrap;
}

.row.lv2 {
    padding-left: 27px;
}

.row.lv3 {
    padding-left: 61px;
}

.exp {
    width: 9px;
    height: 9px;
    margin: 2px 6px 0 0;
}

.row .icon {
    margin-right: 5px;
}

.toc input {
    appearance: none;
    width: 11px;
    height: 11px;
    margin: 0 6px 0 2px;
    border: 1px solid #000;
    background: #fff;
}

.toc input:checked::after {
    content: "";
    display: block;
    width: 3px;
    height: 6px;
    margin: 0 0 0 3px;
    border: solid #000;
    border-width: 0 2px 2px 0;
    transform: rotate(45deg);
}

.toc label {
    padding: 0 2px;
}

.selected {
    color: #fff;
    background: #3399ff;
}

.current {
    padding: 0 2px;
    margin-left: -2px;
    background: #efefef;
}

.legend {
    display: grid;
    grid-template-columns: 13px auto;
    column-gap: 5px;
    padding-left: 59px;
    margin-bottom: 24px;
}

.legend p {
    grid-column: 1 / 3;
    padding-left: 23px;
}

.ramp {
    height: 36px;
    border-bottom: 1px solid #222;
}

.ramp.gray {
    background: linear-gradient(#f2f2f2, #000);
}

.ramp.color {
    background: linear-gradient(#165286 0 12%, #2a8c94 12% 25%, #3fa07c 25% 33%, #10c83c 33% 45%, #6ce010 45% 53%, #f8f800 53% 65%, #f0c414 65% 78%, #e08c20 78% 88%, #cc5034 88%);
}

.range {
    height: 48px;
    display: flex;
    flex-direction: column;
    justify-content: space-between;
    line-height: 12px;
}

/* map */
.mapframe {
    flex: 1;
    min-width: 0;
    display: grid;
    grid-template-columns: 1fr 17px;
    grid-template-rows: 1fr 18px;
    border: 2px solid #777;
    border-right: 1px solid #fff;
    border-bottom: 1px solid #fff;
}

.mapview {
    min-height: 0;
    display: flex;
    align-items: center;
    justify-content: center;
    overflow: hidden;
    background: #fff;
}

#terrain {
    flex: none;
    width: 519px;
    height: 510px;
    image-rendering: pixelated;
}

.vscroll {
    width: 17px;
    display: flex;
    flex-direction: column;
    background: #efefef;
}

.vscroll button {
    height: 18px;
    display: flex;
    align-items: center;
    justify-content: center;
}

.vscroll button::after,
.hscroll button::after {
    content: "";
    border: 4px solid transparent;
}

.vscroll .up::after {
    border-bottom-color: #444;
    border-top: 0;
}

.vscroll .down::after {
    border-top-color: #444;
    border-bottom: 0;
}

.track {
    flex: 1;
    display: flex;
    flex-direction: column;
}

.thumb {
    flex: 1;
    display: flex;
    align-items: center;
    justify-content: center;
    border: 1px solid #979797;
    border-radius: 2px;
    background: linear-gradient(90deg, #f3f3f3, #e2e2e2 50%, #cfcfcf 50%, #c4c4c4);
}

.thumb::after {
    content: "";
    width: 7px;
    height: 7px;
    background: repeating-linear-gradient(#555 0 1px, #eee 1px 3px);
}

.toolbox .vscroll {
    width: 15px;
}

/* thumb sits below the rows already scrolled past */
.toolbox .track::before {
    content: "";
    flex: 175;
}

.toolbox .thumb {
    flex: 316;
}

.toolbox .track::after {
    content: "";
    flex: 33;
}

.viewbar {
    grid-column: 1 / 3;
    display: flex;
    align-items: center;
    padding: 0 17px 0 1px;
    border-top: 1px solid #ddd;
    background: #f0f0f0;
}

.view {
    width: 17px;
    height: 15px;
    display: flex;
    align-items: center;
    justify-content: center;
}

.view.wide {
    margin-left: 5px;
}

.view.on {
    border: 1px solid #777;
    border-radius: 2px;
    background: #ddd;
}

.view svg {
    width: 10px;
    height: 10px;
}

.bar {
    width: 1px;
    height: 13px;
    background: #888;
}

.hscroll {
    flex: 1;
    height: 15px;
    display: flex;
}

.hscroll button {
    width: 18px;
    display: flex;
    align-items: center;
    justify-content: center;
}

.hscroll .left::after {
    border-right-color: #444;
    border-left: 0;
}

.hscroll .right::after {
    border-left-color: #444;
    border-right: 0;
}

.hscroll .thumb {
    background: linear-gradient(#f3f3f3, #e2e2e2 50%, #cfcfcf 50%, #c4c4c4);
}

.hscroll .thumb::after {
    background: repeating-linear-gradient(90deg, #555 0 1px, #eee 1px 3px);
}

.toolbox .panel-body {
    display: flex;
}

.tree {
    flex: 1;
    min-width: 0;
    overflow: hidden;
}

.statusbar {
    height: 19px;
    flex: none;
    display: flex;
    justify-content: flex-end;
    padding-top: 2px;
}

.statusbar span {
    width: 252px;
}
```
FILE: terrain.js
```js
// elevation samples as gray levels, one every 40px
const heights = [
    [38, 28, 5, 8, 25, 45, 80, 50, 25, 42, 65, 105, 98, 100],
    [28, 18, 15, 24, 37, 65, 85, 75, 55, 34, 62, 85, 98, 104],
    [26, 20, 34, 42, 45, 80, 120, 100, 75, 52, 58, 68, 85, 112],
    [44, 32, 46, 54, 62, 75, 108, 132, 106, 84, 82, 90, 95, 102],
    [48, 38, 50, 75, 85, 86, 92, 118, 140, 142, 136, 118, 112, 115],
    [48, 48, 50, 75, 95, 118, 125, 138, 150, 172, 180, 165, 155, 158],
    [56, 60, 64, 64, 75, 95, 145, 168, 185, 190, 198, 200, 210, 212],
    [75, 78, 78, 80, 80, 85, 110, 140, 150, 160, 165, 195, 232, 238],
    [95, 82, 88, 100, 102, 98, 97, 115, 130, 150, 178, 182, 195, 215],
    [112, 116, 116, 108, 132, 134, 116, 118, 138, 146, 155, 175, 205, 228],
    [130, 130, 124, 118, 146, 164, 150, 138, 158, 150, 160, 164, 180, 205],
    [165, 165, 148, 132, 150, 182, 178, 165, 168, 178, 170, 182, 205, 225],
    [185, 195, 175, 155, 150, 190, 205, 200, 200, 208, 210, 218, 230, 245],
    [185, 212, 190, 162, 158, 190, 215, 222, 225, 228, 240, 225, 240, 252],
];

// narrow valleys and ridges the 40px samples miss: depth, width, points
const creases = [
    [-12, 12, [[605, 425], [640, 455], [695, 495], [735, 515], [785, 530]]],
    [-10, 16, [[510, 480], [525, 540], [540, 600], [560, 650]]],
    [-8, 14, [[635, 500], [660, 530], [690, 565], [730, 600]]],
    [-8, 12, [[920, 485], [860, 500], [800, 515]]],
    [-8, 12, [[800, 555], [850, 565], [920, 575]]],
    [7, 18, [[715, 545], [745, 580], [790, 625]]],
    [9, 20, [[560, 520], [590, 570], [640, 620]]],
    [-12, 16, [[500, 160], [460, 210], [445, 270], [435, 330]]],
    [-10, 12, [[510, 190], [530, 240], [560, 265]]],
    [-9, 10, [[460, 330], [500, 375], [545, 400]]],
    [-8, 12, [[420, 470], [428, 520], [425, 560]]],
    [-10, 14, [[720, 160], [750, 190], [790, 212]]],
];

// no-data channel, in map units
const channel = [
    [622, 150], [622, 171], [628, 180], [625, 190], [612, 200], [590, 212], [576, 224], [573, 236],
    [573, 246], [582, 262], [590, 276], [598, 287], [593, 292], [560, 292], [545, 290], [535, 284],
    [522, 278], [514, 278], [509, 290], [505, 303], [501, 312], [501, 333], [509, 347], [515, 355],
    [528, 370], [537, 382], [546, 392], [550, 406], [557, 411], [570, 411], [556, 418], [540, 408],
    [533, 402], [510, 403], [500, 407], [478, 408], [468, 420], [463, 432], [461, 435], [455, 430],
    [442, 423], [428, 433], [415, 425], [400, 422], [400, 454], [412, 455], [420, 458], [431, 462],
    [432, 471], [435, 471], [435, 462], [457, 462], [467, 470], [475, 465], [484, 466], [487, 472],
    [492, 472], [488, 464], [486, 450], [488, 438], [500, 432], [512, 424], [530, 423], [545, 430],
    [560, 436], [572, 441], [579, 431], [592, 429], [605, 436], [614, 446], [622, 452], [625, 449],
    [619, 441], [608, 433], [592, 424], [585, 414], [583, 405], [573, 397], [568, 380], [555, 364],
    [540, 353], [525, 341], [515, 330], [515, 309], [528, 300], [545, 303], [555, 307], [610, 306],
    [624, 302], [620, 290], [612, 278], [600, 262], [590, 247], [587, 236], [589, 229], [600, 222],
    [620, 210], [640, 196], [645, 190], [645, 169], [656, 169], [668, 179], [682, 188], [690, 202],
    [705, 218], [722, 235], [740, 248], [755, 252], [773, 259], [787, 259], [800, 254], [815, 249],
    [850, 249], [852, 254], [870, 255], [880, 259], [893, 261], [888, 254], [884, 248], [875, 238],
    [868, 225], [865, 212], [868, 207], [873, 199], [879, 190], [882, 182], [850, 182], [850, 185],
    [821, 185], [813, 178], [810, 150], [795, 150], [797, 170], [803, 185], [812, 195], [830, 200],
    [855, 200], [853, 210], [854, 225], [860, 238], [865, 243], [855, 241], [845, 233], [835, 231],
    [820, 236], [800, 241], [790, 246], [775, 246], [757, 238], [740, 230], [722, 216], [708, 205],
    [697, 192], [688, 180], [680, 170], [670, 160], [664, 150],
];

const ORIGIN_X = 403;
const ORIGIN_Y = 154;
const CELL = 3;

function spline(a, b, c, d, t) {
    return b + 0.5 * t * (c - a + t * (2 * a - 5 * b + 4 * c - d + t * (3 * (b - c) + d - a)));
}

function sample(r, c) {
    r = Math.max(0, Math.min(heights.length - 1, r));
    c = Math.max(0, Math.min(heights[0].length - 1, c));
    return heights[r][c];
}

function distance(x, y, [x1, y1], [x2, y2]) {
    const dx = x2 - x1;
    const dy = y2 - y1;
    const t = Math.max(0, Math.min(1, ((x - x1) * dx + (y - y1) * dy) / (dx * dx + dy * dy)));
    return Math.hypot(x - x1 - t * dx, y - y1 - t * dy);
}

function creaseAt(x, y) {
    let sum = 0;
    for (const [depth, width, points] of creases) {
        let d = Infinity;
        for (let i = 1; i < points.length; i++) {
            d = Math.min(d, distance(x, y, points[i - 1], points[i]));
        }
        sum += depth * Math.exp(-d / width);
    }
    return sum;
}

function heightAt(x, y) {
    const gx = (x - ORIGIN_X) / 40;
    const gy = (y - ORIGIN_Y) / 40;
    const c = Math.floor(gx);
    const r = Math.floor(gy);
    const rows = [-1, 0, 1, 2].map((k) =>
        spline(sample(r + k, c - 1), sample(r + k, c), sample(r + k, c + 1), sample(r + k, c + 2), gx - c),
    );
    return spline(rows[0], rows[1], rows[2], rows[3], gy - r) + creaseAt(x, y);
}

function inChannel(x, y) {
    let inside = false;
    for (let i = 0, j = channel.length - 1; i < channel.length; j = i++) {
        const [xi, yi] = channel[i];
        const [xj, yj] = channel[j];
        if (yi > y !== yj > y && x < ((xj - xi) * (y - yi)) / (yj - yi) + xi) {
            inside = !inside;
        }
    }
    return inside;
}

function noData(x, y) {
    if (y < 156 && x > 504) return true;
    if ((y > 327 && x > 919) || (y > 525 && x > 917)) return true;
    if (y > 257 && y < 261 && ((x > 890 && x < 901) || (x > 904 && x < 911))) return true;
    return inChannel(x, y);
}

const canvas = document.getElementById("terrain");
const ctx = canvas.getContext("2d");

for (let j = 0; j < canvas.height; j++) {
    for (let i = 0; i < canvas.width; i++) {
        const x = ORIGIN_X + (i + 0.5) * CELL;
        const y = ORIGIN_Y + (j + 0.5) * CELL;
        const v = Math.round(Math.max(0, Math.min(255, heightAt(x, y))));
        ctx.fillStyle = noData(x, y) ? "#fff" : `rgb(${v}, ${v}, ${v})`;
        ctx.fillRect(i, j, 1, 1);
    }
}
```
